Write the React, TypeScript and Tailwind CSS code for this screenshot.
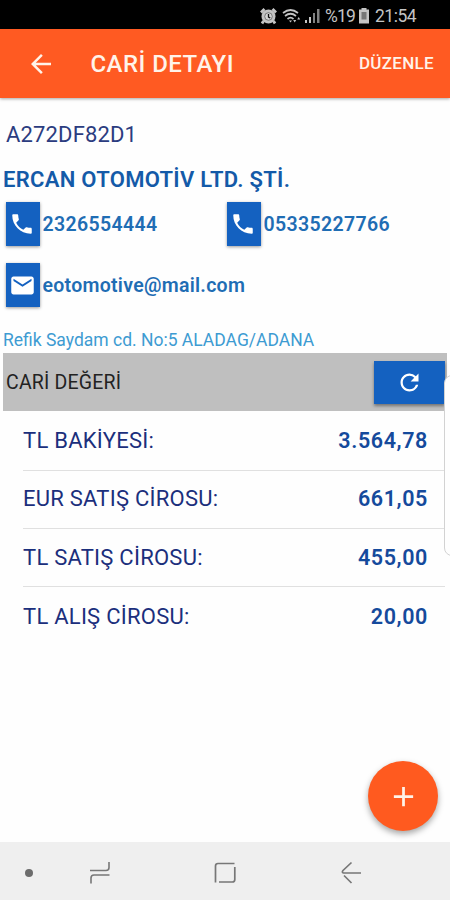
import React from "react";
import { MdAdd, MdArrowBack, MdEmail, MdPhone, MdRefresh } from "react-icons/md";

const rows = [
  { label: "TL BAKİYESİ:", value: "3.564,78" },
  { label: "EUR SATIŞ CİROSU:", value: "661,05" },
  { label: "TL SATIŞ CİROSU:", value: "455,00" },
  { label: "TL ALIŞ CİROSU:", value: "20,00" },
];

function StatusBar() {
  return (
    <div className="flex h-[29px] items-center bg-black pl-[260px] pt-[3px] text-[#c4c4c4]">
      <svg width="17" height="17" viewBox="0 0 17 17" fill="none">
        <path d="M1 4.500 4.500 1M16 4.500 12.500 1M3.500 13 2 15.500M13.500 13 15 15.500" stroke="currentColor" strokeWidth="2.800" />
        <circle cx="8.500" cy="8.500" r="7" fill="currentColor" />
        <circle cx="8.500" cy="8.500" r="3.800" fill="#d4d4d4" stroke="#555" strokeWidth="0.700" />
        <path d="M8.500 6v3l1.800 1" stroke="#111" strokeWidth="1.300" />
      </svg>
      <svg className="ml-[5px]" width="20" height="16" viewBox="0 0 20 16" fill="none" stroke="currentColor">
        <path d="M1 5q7.500-6 15 0M3 8q5.500-4.500 11 0M5.500 11q3-2.600 6 0" strokeWidth="1.700" />
        <path d="M7 12.500h3l-1.500 2z" fill="currentColor" stroke="none" />
        <path d="m11.200 12 1.500 2.500 1.500-2.500zM15.200 11.500l1.500-2.500 1.500 2.500z" fill="currentColor" stroke="none" />
      </svg>
      <svg className="ml-[2px]" width="17" height="16" viewBox="0 0 17 16" fill="currentColor">
        <path d="M1 12h2v3H1zM5 9h2v6H5z" />
        <path d="M9 5h2v10H9zM13 1h2.500v14H13z" opacity=".65" />
      </svg>
      <span className="ml-[4px] w-[30px] whitespace-nowrap text-[17.5px] leading-5 tracking-[-0.8px]">%19</span>
      <svg className="ml-[3px]" width="12" height="16" viewBox="0 0 12 16">
        <path d="M3.500 0h5v1.500H11v14H1v-14h2.500z" fill="currentColor" />
        <path d="M3.500 4h5v7.500h-5z" fill="#777" />
      </svg>
      <span className="ml-[5px] whitespace-nowrap text-[17.5px] leading-5 tracking-[-0.5px]">21:54</span>
    </div>
  );
}

function Contact({ icon, text, className }: { icon: React.ReactNode; text: string; className: string }) {
  return (
    <div className="flex h-11 items-center">
      <div className="flex h-11 w-[33.5px] shrink-0 items-center justify-center bg-[#1461c0] pr-px text-white shadow-[0_1px_3px_rgba(0,0,0,0.4)]">
        {icon}
      </div>
      <span className={`ml-[3px] whitespace-nowrap pt-[2px] text-[19.5px] font-semibold text-[#1f6db4] ${className}`}>{text}</span>
    </div>
  );
}

function NavBar() {
  return (
    <div className="flex h-[58px] items-center bg-[#efefef] pt-[3px] text-[#777]">
      <div className="ml-[25px] h-2 w-2 rounded-full bg-[#6c6c6c]" />
      <svg className="ml-[56px]" width="22" height="24" viewBox="0 0 22 24" fill="none" stroke="currentColor" strokeWidth="1.600">
        <path d="M1 9.500h16q3 0 3-3V1M20.500 14H5q-3 0-3 3v5.500" />
      </svg>
      <svg className="ml-[102px]" width="24" height="24" viewBox="0 0 24 24" fill="none" stroke="currentColor" strokeWidth="1.700">
        <path d="M2.500 21.500V5q0-2.500 2.500-2.500h16.500M21.800 6v12.500q0 2.500-2.500 2.500H6" />
      </svg>
      <svg className="ml-[103px]" width="22" height="24" viewBox="0 0 22 24" fill="none" stroke="currentColor" strokeWidth="1.700">
        <path d="M11.500 1.500 3 9.500Q1.500 11.500 3.500 12H21M4 14.500l7.500 7.500" />
      </svg>
    </div>
  );
}

export default function App() {
  return (
    <div className="relative flex h-[900px] w-[450px] flex-col overflow-hidden bg-[#fefefe] font-[Roboto,sans-serif]">
      <StatusBar />
      <header className="z-10 flex h-[69px] items-center bg-[#ff5a22] pl-[26px] pr-4 text-[#fff3e9] shadow-[0_1px_3px_rgba(0,0,0,0.35)]">
        <MdArrowBack size={30} />
        <h1 className="ml-[34.5px] whitespace-nowrap text-[24px] font-medium leading-8 tracking-[0.45px]">CARİ DETAYI</h1>
        <span className="ml-auto whitespace-nowrap pb-px text-[17px] font-medium leading-6 tracking-[0.3px]">DÜZENLE</span>
      </header>

      <main className="flex flex-1 flex-col">
        <div className="mt-[21px] pl-[6px] text-[22px] leading-8 tracking-[0.15px] text-[#2b3c80]">A272DF82D1</div>
        <div className="mt-[13px] whitespace-nowrap pl-[3px] text-[22px] font-semibold leading-8 tracking-[0.3px] text-[#145aa8]">
          ERCAN OTOMOTİV LTD. ŞTİ.
        </div>
        <div className="mt-[6px] grid grid-cols-[221px_1fr] pl-[6px]">
          <Contact icon={<MdPhone size={26} />} text="2326554444" className="tracking-[0.35px]" />
          <Contact icon={<MdPhone size={26} />} text="05335227766" className="tracking-[0.35px]" />
        </div>
        <div className="mt-[17px] pl-[6px]">
          <Contact icon={<MdEmail size={27} />} text="eotomotive@mail.com" className="tracking-[0.28px]" />
        </div>
        <div className="mt-[21px] whitespace-nowrap pl-[3px] text-[17.5px] leading-6 text-[#3d9bd2]">
          Refik Saydam cd. No:5 ALADAG/ADANA
        </div>
        <div className="ml-[3px] mr-[3px] mt-px flex h-[58px] items-center justify-between bg-[#bfbfbf] pl-[3px] pr-[2px]">
          <span className="pt-[2px] text-[19.5px] tracking-[0.2px] text-[#222]">CARİ DEĞERİ</span>
          <div className="flex h-[43px] w-[71px] items-center justify-center bg-[#1461c0] text-white shadow-[0_2px_3px_rgba(0,0,0,0.4)]">
            <MdRefresh size={27} />
          </div>
        </div>
        <div className="ml-[23px] mr-[5px] mt-[1.5px] divide-y divide-[#e0e0e0]">
          {rows.map((row) => (
            <div key={row.label} className="flex h-[58.3px] items-center justify-between pr-[17px]">
              <span className="text-[22px] leading-8 tracking-[0.25px] text-[#1b2f7c]">{row.label}</span>
              <span className="text-[21.5px] font-semibold leading-8 tracking-[0.6px] text-[#154a9c]">{row.value}</span>
            </div>
          ))}
        </div>
      </main>

      <NavBar />

      <div className="absolute left-[444px] top-[375px] h-[181px] w-5 rounded-[8px] border border-[#d2d2d2] bg-[#fefefe]" />
      <button className="absolute left-[368px] top-[761px] flex h-[70px] w-[70px] items-center justify-center rounded-full bg-[#ff5a1f] text-[#fff3e9] shadow-[0_3px_6px_rgba(0,0,0,0.35)]">
        <MdAdd size={33} />
      </button>
    </div>
  );
}
